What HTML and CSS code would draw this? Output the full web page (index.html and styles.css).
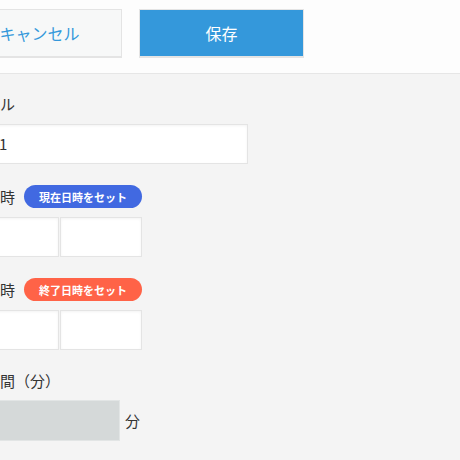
FILE: index.html
```html
<!DOCTYPE html>
<html lang="ja">
<head>
<meta charset="utf-8">
<title>予定の編集</title>
<link rel="stylesheet" href="styles.css">
</head>
<body>
<div class="viewport">
  <header class="header">
    <div class="actions">
      <button class="btn btn-cancel" type="button">キャンセル</button>
      <button class="btn btn-save" type="button">保存</button>
    </div>
  </header>
  <main class="form">
    <div class="field field-title">
      <div class="label-row"><span class="label">タイトル</span></div>
      <div class="input title-input">予定1</div>
    </div>
    <div class="field">
      <div class="label-row">
        <span class="label">開始日時</span>
        <span class="pill pill-blue">現在日時をセット</span>
      </div>
      <div class="datetime">
        <div class="input date-input"></div>
        <div class="input time-input"></div>
      </div>
    </div>
    <div class="field">
      <div class="label-row">
        <span class="label">終了日時</span>
        <span class="pill pill-red">終了日時をセット</span>
      </div>
      <div class="datetime">
        <div class="input date-input"></div>
        <div class="input time-input"></div>
      </div>
    </div>
    <div class="field">
      <div class="label-row"><span class="label">所要時間（分）</span></div>
      <div class="duration">
        <div class="input input-disabled"></div>
        <span class="unit">分</span>
      </div>
    </div>
  </main>
</div>
</body>
</html>
```
FILE: styles.css
```css
html, body {
  margin: 0;
  padding: 0;
  background: #f4f4f4;
  overflow: hidden;
}

body {
  font-family: "Noto Sans CJK JP", "Noto Sans", sans-serif;
  color: #333;
}

.viewport {
  margin-left: -60px;
  width: 560px;
}

.header {
  background: #fdfdfd;
  height: 74px;
  border-bottom: 1px solid #e6e6e6;
  box-sizing: border-box;
  padding: 9px 0 0 17px;
}

.actions {
  display: flex;
  gap: 17px;
}

.btn {
  width: 165px;
  height: 49px;
  box-sizing: border-box;
  border: 1px solid #e4e4e4;
  border-bottom-width: 2px;
  font-family: inherit;
  font-size: 16px;
  padding: 0;
  line-height: 1;
}

.btn-cancel {
  background: #f7f8f8;
  color: #3498db;
}

.btn-save {
  background: #3498db;
  color: #fff;
}

.form {
  padding: 20px 0 0 15px;
}

.field {
  margin-bottom: 21px;
}

.label-row {
  display: flex;
  align-items: center;
  gap: 9px;
  min-height: 20px;
  margin-bottom: 9px;
}

.field-title .label-row {
  margin-bottom: 10px;
}

.label {
  font-size: 15px;
  line-height: 20px;
}

.pill {
  display: inline-flex;
  align-items: center;
  justify-content: center;
  width: 118px;
  height: 23px;
  border-radius: 12px;
  color: #fff;
  font-size: 11px;
  font-weight: bold;
}

.pill-blue {
  background: #4169e1;
}

.pill-red {
  background: #ff6347;
}

.input {
  box-sizing: border-box;
  height: 40px;
  background: #fff;
  border: 1px solid #e4e4e4;
  box-shadow: inset 0 1px 3px rgba(0, 0, 0, 0.05);
  font-size: 15px;
  line-height: 38px;
}

.title-input {
  width: 293px;
  padding-left: 13px;
}

.datetime {
  display: flex;
  gap: 1px;
}

.date-input {
  width: 104px;
}

.time-input {
  width: 82px;
}

.duration {
  display: flex;
  align-items: center;
  gap: 5px;
}

.input-disabled {
  width: 165px;
  height: 41px;
  background: #d5d9d9;
  border-color: #e2e5e5;
  box-shadow: none;
}

.unit {
  font-size: 15px;
}
```
